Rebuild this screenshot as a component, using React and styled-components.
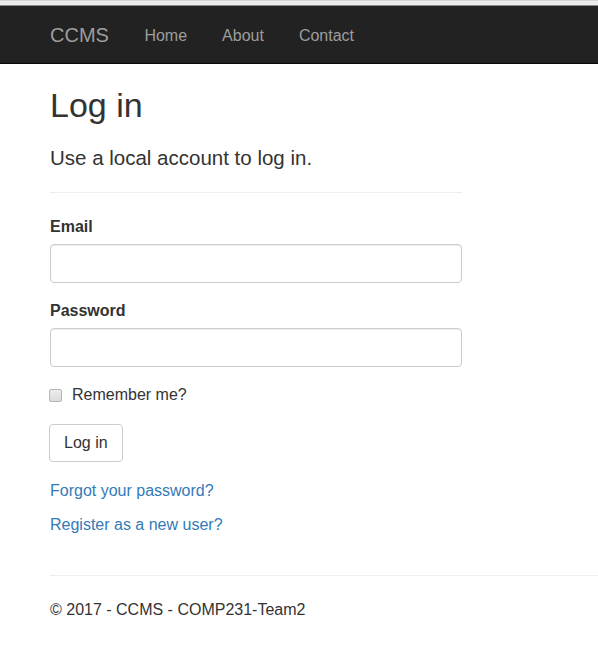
import * as React from 'react'
import styled, { createGlobalStyle } from 'styled-components'

const GlobalStyle = createGlobalStyle`
  html, body {
    margin: 0;
    padding: 0;
    background: #fff;
  }

  body {
    font-family: "Liberation Sans", Arial, sans-serif;
    font-size: 16px;
    color: #333;
  }
`

export default function App() {
  return (
    <Page>
      <GlobalStyle />
      <TopStrip />
      <Navbar>
        <Brand href="#">CCMS</Brand>
        <NavLink href="#">Home</NavLink>
        <NavLink href="#">About</NavLink>
        <NavLink href="#">Contact</NavLink>
      </Navbar>
      <Main>
        <Form onSubmit={e => e.preventDefault()}>
          <Title>Log in</Title>
          <Subtitle>Use a local account to log in.</Subtitle>
          <Rule />
          <Label htmlFor="email">Email</Label>
          <Input id="email" type="email" />
          <Label htmlFor="password" $gap={18}>Password</Label>
          <Input id="password" type="password" />
          <CheckRow>
            <Checkbox type="checkbox" />
            Remember me?
          </CheckRow>
          <Button type="submit">Log in</Button>
          <Link href="#" $gap={19}>Forgot your password?</Link>
          <Link href="#" $gap={14}>Register as a new user?</Link>
        </Form>
      </Main>
      <Footer>
        <FooterRule />
        <FooterText>© 2017 - CCMS - COMP231-Team2</FooterText>
      </Footer>
    </Page>
  )
}

const Page = styled.div`
  display: flex;
  flex-direction: column;
  min-height: 645px;
`

const TopStrip = styled.div`
  height: 4px;
  background: #ededed;
  border-top: 1px solid #d4d4d4;
  border-bottom: 1px solid #8a8a8a;
`

const Navbar = styled.nav`
  display: flex;
  align-items: flex-start;
  height: 58px;
  box-sizing: border-box;
  padding: 19px 0 0 50px;
  background: #222;
  border-bottom: 1px solid #080808;
`

const Brand = styled.a`
  font-size: 20px;
  line-height: 20px;
  color: #9d9d9d;
  text-decoration: none;
  margin-right: 18px;
`

const NavLink = styled.a`
  font-size: 16px;
  line-height: 20px;
  margin-top: 1px;
  padding: 0 17.5px;
  color: #9d9d9d;
  text-decoration: none;
`

const Main = styled.main`
  padding-left: 50px;
`

const Form = styled.form`
  display: flex;
  flex-direction: column;
  align-items: flex-start;
  width: 412px;
`

const Title = styled.h2`
  margin: 23px 0 0;
  font-size: 34px;
  line-height: 1.1;
  font-weight: 400;
`

const Subtitle = styled.h4`
  margin: 23px 0 0;
  font-size: 20.5px;
  line-height: 22px;
  font-weight: 400;
`

const Rule = styled.hr`
  align-self: stretch;
  margin: 23px 0 0;
  border: 0;
  border-top: 1px solid #eee;
`

const Label = styled.label`
  margin-top: ${({ $gap }) => $gap ?? 24}px;
  font-weight: 700;
  line-height: 20px;
`

const Input = styled.input`
  align-self: stretch;
  box-sizing: border-box;
  height: 39px;
  margin-top: 7px;
  padding: 6px 12px;
  font: inherit;
  color: #555;
  background: #fff;
  border: 1px solid #ccc;
  border-radius: 4px;
  box-shadow: inset 0 1px 1px rgba(0, 0, 0, 0.075);
  outline: none;
`

const CheckRow = styled.label`
  display: flex;
  align-items: center;
  gap: 10px;
  margin-top: 18px;
  line-height: 20px;
  margin-left: -1px;
`

const Checkbox = styled.input`
  appearance: none;
  width: 13px;
  height: 13px;
  margin: 1px 0 0 0;
  box-sizing: border-box;
  border: 1px solid #b4b4b4;
  border-radius: 2px;
  background: linear-gradient(#ececec, #dcdcdc);
`

const Button = styled.button`
  height: 38px;
  margin-top: 19px;
  margin-left: -1px;
  padding: 0 14px;
  font: inherit;
  line-height: 20px;
  color: #333;
  background: #fff;
  border: 1px solid #ccc;
  border-radius: 4px;
`

const Link = styled.a`
  margin-top: ${({ $gap }) => $gap}px;
  line-height: 20px;
  color: #337ab7;
  text-decoration: none;
`

const Footer = styled.footer`
  padding-left: 50px;
  margin-top: 40px;
`

const FooterRule = styled.hr`
  margin: 0;
  border: 0;
  border-top: 1px solid #eee;
`

const FooterText = styled.p`
  margin: 24px 0 0;
  line-height: 20px;
`
